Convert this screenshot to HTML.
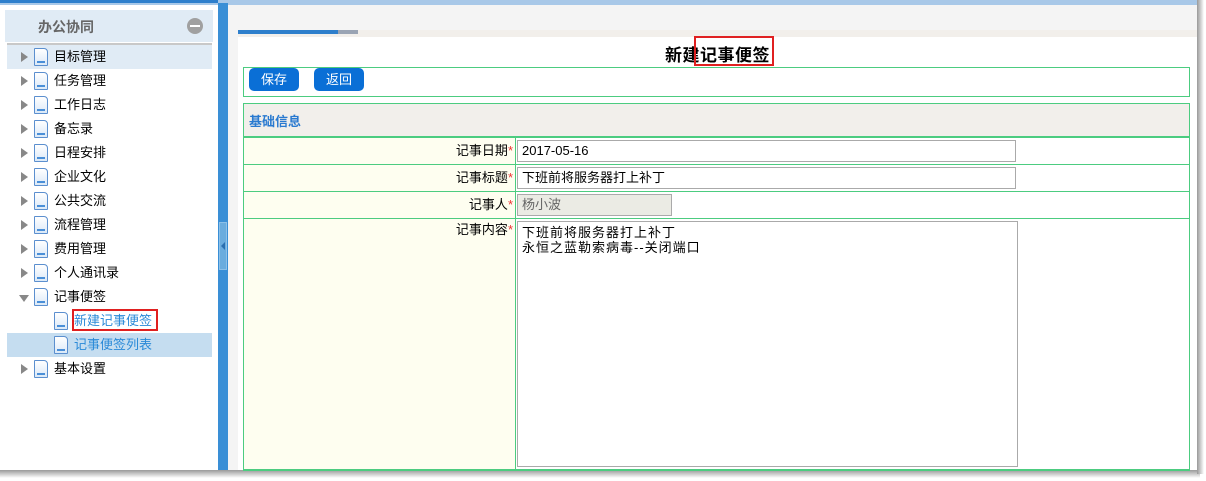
<!DOCTYPE html><html><head><meta charset="utf-8"><style>
*{margin:0;padding:0;box-sizing:border-box}
body{width:1206px;height:481px;background:#fff;position:relative;overflow:hidden;font-family:"Liberation Sans","Noto Sans CJK SC",sans-serif;font-size:13px;color:#000}
.a{position:absolute}
.it{position:absolute;left:7px;width:205px;height:24px;line-height:24px}
.it .ar{position:absolute;left:14px;top:7px;width:0;height:0;border-left:7px solid #888;border-top:5px solid transparent;border-bottom:5px solid transparent}
.it .ic{position:absolute;top:3px;width:14px;height:18px;border:1px solid #5b8fcf;background:linear-gradient(#fff,#dbe9f8);border-radius:1px 4px 1px 1px}
.it .ic:after{content:"";position:absolute;left:2px;right:2px;bottom:2px;height:2px;background:#4a8fd8}
.it span{position:absolute}
.lab{position:absolute;left:243px;width:272px;text-align:right;padding-right:2px;background:#fefef0}
.lab b{color:#e33;font-weight:normal}
.inp{position:absolute;border:1px solid #aaa;background:#fff;padding-left:4px;font-size:13px;line-height:19px}
.hl{position:absolute;left:243px;width:947px;height:1px;background:#4ccc80}
</style></head><body>
<div class="a" style="left:0;top:0;width:1200px;height:5px;background:#a8c8e8"></div>
<div class="a" style="left:0;top:0;width:218px;height:3px;background:#2e7fcc"></div>
<div class="a" style="left:0;top:470px;width:1200px;height:8px;background:linear-gradient(#999,#fff)"></div>
<div class="a" style="left:1197px;top:0;width:7px;height:474px;background:linear-gradient(90deg,#999,#fff)"></div>
<div class="a" style="left:5px;top:10px;width:208px;height:32px;background:#e0ebf5"></div>
<div class="a" style="left:38px;top:17px;font-weight:bold;color:#666;font-size:14px">办公协同</div>
<div class="a" style="left:187px;top:18px;width:16px;height:16px;border-radius:50%;background:#a0a0a0"></div>
<div class="a" style="left:190px;top:25px;width:10px;height:2px;background:#fff"></div>
<div class="a" style="left:7px;top:43px;width:205px;height:2px;background:#c8c8c8"></div>
<div class="it" style="top:45px;background:#e0ebf5"><i class="ar"></i><i class="ic" style="left:27px"></i><span style="left:47px">目标管理</span></div>
<div class="it" style="top:69px"><i class="ar"></i><i class="ic" style="left:27px"></i><span style="left:47px">任务管理</span></div>
<div class="it" style="top:93px"><i class="ar"></i><i class="ic" style="left:27px"></i><span style="left:47px">工作日志</span></div>
<div class="it" style="top:117px"><i class="ar"></i><i class="ic" style="left:27px"></i><span style="left:47px">备忘录</span></div>
<div class="it" style="top:141px"><i class="ar"></i><i class="ic" style="left:27px"></i><span style="left:47px">日程安排</span></div>
<div class="it" style="top:165px"><i class="ar"></i><i class="ic" style="left:27px"></i><span style="left:47px">企业文化</span></div>
<div class="it" style="top:189px"><i class="ar"></i><i class="ic" style="left:27px"></i><span style="left:47px">公共交流</span></div>
<div class="it" style="top:213px"><i class="ar"></i><i class="ic" style="left:27px"></i><span style="left:47px">流程管理</span></div>
<div class="it" style="top:237px"><i class="ar"></i><i class="ic" style="left:27px"></i><span style="left:47px">费用管理</span></div>
<div class="it" style="top:261px"><i class="ar"></i><i class="ic" style="left:27px"></i><span style="left:47px">个人通讯录</span></div>
<div class="it" style="top:285px"><i class="ar" style="left:12px;top:10px;border-top:7px solid #888;border-left:5px solid transparent;border-right:5px solid transparent;border-bottom:0"></i><i class="ic" style="left:27px"></i><span style="left:47px">记事便签</span></div>
<div class="it" style="top:309px"><i class="ic" style="left:47px"></i><span style="left:67px;color:#2a8ad8">新建记事便签</span></div>
<div class="a" style="left:72px;top:309px;width:86px;height:22px;border:2px solid #e02020"></div>
<div class="it" style="top:333px;background:#c5ddf0"><i class="ic" style="left:47px"></i><span style="left:67px;color:#2a8ad8">记事便签列表</span></div>
<div class="it" style="top:357px"><i class="ar"></i><i class="ic" style="left:27px"></i><span style="left:47px">基本设置</span></div>
<div class="a" style="left:218px;top:3px;width:10px;height:467px;background:#3a8fd6"></div>
<div class="a" style="left:219px;top:222px;width:8px;height:48px;background:#6aacde;border:1px solid #8cc0e8"></div>
<div class="a" style="left:221px;top:242px;width:0;height:0;border-right:4px solid #2a6fb0;border-top:4px solid transparent;border-bottom:4px solid transparent"></div>
<div class="a" style="left:228px;top:5px;width:969px;height:465px;background:#f4f4f4"></div>
<div class="a" style="left:238px;top:30px;width:959px;height:7px;background:#f2efeb"></div>
<div class="a" style="left:238px;top:30px;width:100px;height:4px;background:#2e7fcc"></div>
<div class="a" style="left:338px;top:30px;width:20px;height:4px;background:#9aa4b4"></div>
<div class="a" style="left:238px;top:37px;width:959px;height:433px;background:#fff"></div>
<div class="a" style="left:238px;top:41px;width:959px;text-align:center;font-weight:bold;font-size:17px;letter-spacing:0.5px">新建记事便签</div>
<div class="a" style="left:694px;top:36px;width:80px;height:30px;border:2px solid #e02020"></div>
<div class="a" style="left:243px;top:67px;width:947px;height:30px;border:1px solid #4ccc80"></div>
<div class="a" style="left:249px;top:68px;width:50px;height:23px;background:#0a6fd6;border-radius:5px;color:#fff;text-align:center;line-height:23px">保存</div>
<div class="a" style="left:314px;top:68px;width:50px;height:23px;background:#0a6fd6;border-radius:5px;color:#fff;text-align:center;line-height:23px">返回</div>
<div class="a" style="left:243px;top:103px;width:947px;height:368px;border:1px solid #4ccc80"></div>
<div class="a" style="left:244px;top:104px;width:945px;height:32px;background:#f2efeb;color:#2a7ad0;font-weight:bold;line-height:36px;padding-left:5px">基础信息</div>
<div class="hl" style="top:136px;height:2px"></div>
<div class="lab" style="top:138px;height:26px;line-height:26px;left:244px;width:271px">记事日期<b>*</b></div>
<div class="hl" style="top:164px"></div>
<div class="lab" style="top:165px;height:26px;line-height:26px;left:244px;width:271px">记事标题<b>*</b></div>
<div class="hl" style="top:191px"></div>
<div class="lab" style="top:192px;height:26px;line-height:26px;left:244px;width:271px">记事人<b>*</b></div>
<div class="hl" style="top:218px"></div>
<div class="lab" style="top:219px;height:250px;line-height:22px;left:244px;width:271px">记事内容<b>*</b></div>
<div class="hl" style="top:469px"></div>
<div class="a" style="left:515px;top:138px;width:1px;height:332px;background:#4ccc80"></div>
<div class="inp" style="left:517px;top:140px;width:499px;height:22px;line-height:20px">2017-05-16</div>
<div class="inp" style="left:517px;top:167px;width:499px;height:22px;line-height:20px">下班前将服务器打上补丁</div>
<div class="inp" style="left:517px;top:194px;width:155px;height:22px;line-height:20px;background:#ebebe4;color:#666">杨小波</div>
<div class="inp" style="left:517px;top:221px;width:501px;height:246px;line-height:15px;padding-top:3px;letter-spacing:1px">下班前将服务器打上补丁<br>永恒之蓝勒索病毒--关闭端口</div>
</body></html>
